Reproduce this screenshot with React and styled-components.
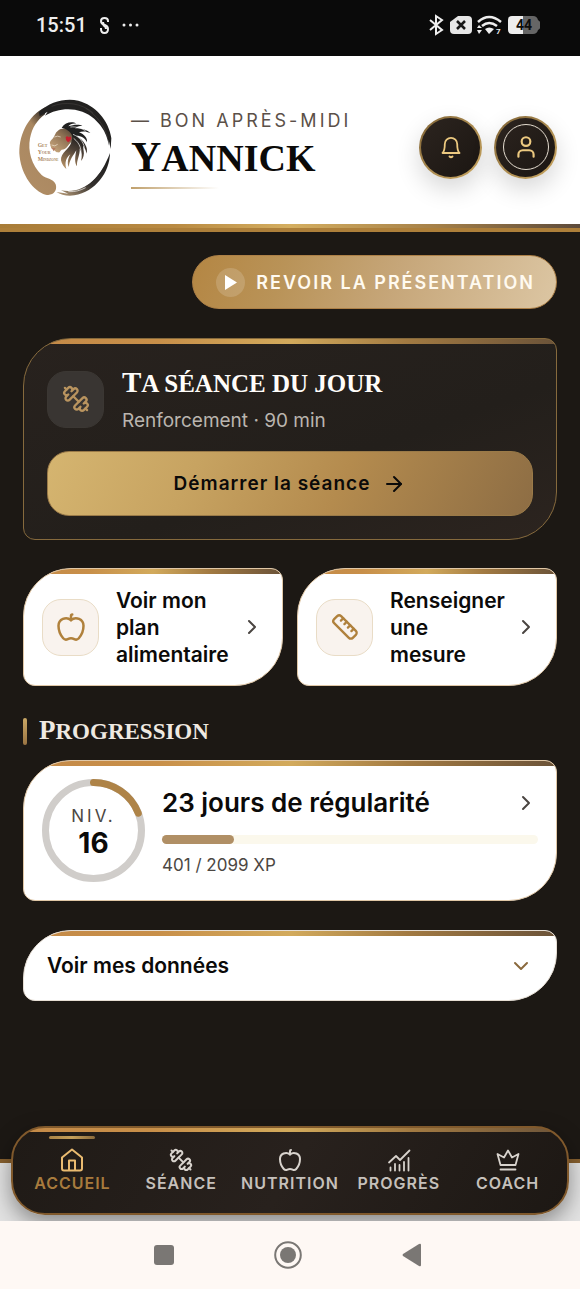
/*
    Home screen
    Greeting header, session of the day, shortcuts, progression and bottom dock
 */

import React from "react";
import styled, { createGlobalStyle, css } from "styled-components";
import { Apple, ArrowRight, ChevronDown, ChevronRight, Dumbbell, Ruler, User } from "lucide-react";

const color_dark = "#1c1814";
const color_gold = "#b0813c";
const color_tan = "#b08f65";
const color_chevron = "#4a4541";
const gold_line = "linear-gradient(90deg, #c48a48 0%, #c88f49 25%, #d2aa5c 50%, #a27a42 72%, #6b5339 100%)";
const font_text = "Inter, Roboto, sans-serif";
const font_title = "'Liberation Serif', 'Times New Roman', serif";

const GlobalStyle = createGlobalStyle`
  * {
    box-sizing: border-box;
  }

  body {
    margin: 0;
    background: #ffffff;
    font-family: ${font_text};
    color: #0b0a09;
  }

  button {
    margin: 0;
    padding: 0;
    border: 0;
    background: none;
    font: inherit;
    color: inherit;
    text-align: left;
    cursor: pointer;
  }

  a {
    color: inherit;
    text-decoration: none;
  }

  h1, h2, p {
    margin: 0;
  }

  svg {
    display: block;
    flex-shrink: 0;
  }
`;

const Screen = styled.div`
  min-height: 100vh;
  display: flex;
  flex-direction: column;
`;

const StatusBar = styled.div`
  height: 56px;
  padding: 0 40px 6px 36px;
  display: flex;
  align-items: center;
  justify-content: space-between;
  background: #0a0a0a;
  color: #eeeeee;
  font-family: Roboto, sans-serif;
  font-size: 20px;
  font-weight: 500;
`;

const StatusGroup = styled.div`
  display: flex;
  align-items: center;
  gap: 12px;
`;

const AppArea = styled.div`
  position: relative;
  flex: 1;
  display: flex;
  flex-direction: column;
  padding-bottom: 58px;
  background: #e2e2e2;
`;

const Header = styled.header`
  height: 168px;
  padding: 14px 23px 0 15px;
  display: flex;
  align-items: center;
  gap: 16px;
  background: #ffffff;
`;

const Greeting = styled.div`
  flex: 1;
  min-width: 0;
  padding-top: 3px;
`;

const Eyebrow = styled.p`
  font-size: 18px;
  line-height: 24px;
  letter-spacing: 3px;
  text-transform: uppercase;
  white-space: nowrap;
  color: #5b5048;
`;

const Name = styled.h1`
  font-family: ${font_title};
  font-size: 38px;
  line-height: 48px;
  font-weight: 700;
  text-transform: uppercase;

  &::first-letter {
    font-size: 42px;
  }
`;

const Underline = styled.div`
  width: 88px;
  height: 2px;
  margin-top: 5px;
  background: linear-gradient(90deg, #c0a06c, #ffffff);
`;

const HeaderActions = styled.div`
  display: flex;
  gap: 12px;
`;

const RoundButton = styled.button`
  width: 63px;
  height: 63px;
  display: flex;
  align-items: center;
  justify-content: center;
  border: 2px solid transparent;
  border-radius: 50%;
  background: linear-gradient(135deg, #2c241f, #1b1612) padding-box,
    linear-gradient(135deg, #7d6033, #a98a50 50%, #c9a560) border-box;
  box-shadow: 0 10px 24px rgba(0, 0, 0, 0.16);
  color: #ecc980;
`;

const Avatar = styled.span`
  width: 46px;
  height: 46px;
  display: flex;
  align-items: center;
  justify-content: center;
  border: 1px solid #e4dccf;
  border-radius: 50%;
`;

const HeaderEdge = styled.div`
  height: 8px;
  border-bottom: 4px solid #ad7f3a;
  background: linear-gradient(90deg, #a87c38 0%, #b98a42 30%, #d4ae60 50%, #a58048 75%, #5c4a3b 100%);
`;

const Main = styled.main`
  flex: 1;
  display: flex;
  flex-direction: column;
  padding: 23px 23px 0;
  border-bottom: 4px solid #87602f;
  background: ${color_dark};
`;

const ReplayButton = styled.button`
  align-self: flex-end;
  height: 54px;
  padding: 0 21px 0 23px;
  display: flex;
  align-items: center;
  gap: 11px;
  border: 1px solid #ad8047;
  border-radius: 27px;
  background: linear-gradient(110deg, #b48643 0%, #b99358 25%, #c6a679 55%, #dcc6a3 100%);
  color: #fffaf0;
  font-size: 18px;
  font-weight: 600;
  letter-spacing: 2px;
  text-transform: uppercase;
  white-space: nowrap;
`;

const PlayDot = styled.span`
  width: 29px;
  height: 29px;
  display: flex;
  align-items: center;
  justify-content: center;
  border-radius: 50%;
  background: rgba(255, 255, 255, 0.16);
`;

const cardShape = css`
  border: 1px solid #e0c7a6;
  border-radius: 48px 12px 48px 12px;
  background: ${gold_line} 0 0 / 100% 5px no-repeat, #ffffff;
`;

const SessionCard = styled.section`
  margin-top: 29px;
  padding: 26px 23px 23px;
  ${cardShape}
  border-color: #866a3d;
  background: ${gold_line} 0 0 / 100% 5px no-repeat,
    linear-gradient(160deg, #28221e 0%, #231f1b 60%, #2c241f 100%);
`;

const SessionHead = styled.div`
  display: flex;
  align-items: center;
  gap: 18px;
  margin-bottom: 18px;
`;

const IconTile = styled.span`
  width: 57px;
  height: 57px;
  flex-shrink: 0;
  display: flex;
  align-items: center;
  justify-content: center;
  border: 1px solid ${(props) => (props.$dark ? "#3b3733" : "#e9dcc6")};
  border-radius: 19px;
  background: ${(props) => (props.$dark ? "#393532" : "#f9f3ee")};
  color: ${(props) => (props.$dark ? "#b9945f" : color_gold)};
`;

const SessionTitle = styled.h2`
  font-family: ${font_title};
  font-size: 25px;
  line-height: 34px;
  font-weight: 700;
  text-transform: uppercase;
  color: #fffdfa;

  &::first-letter {
    font-size: 29px;
  }
`;

const SessionInfo = styled.p`
  margin-top: 8px;
  font-size: 19px;
  line-height: 24px;
  color: #bab5af;
`;

const StartButton = styled.button`
  width: 100%;
  height: 65px;
  display: flex;
  align-items: center;
  justify-content: center;
  gap: 12px;
  border: 1px solid #9a7a48;
  border-radius: 22px;
  background: linear-gradient(115deg, #d5b570 0%, #c7a361 30%, #b48b4e 60%, #8d6d44 100%);
  font-size: 19px;
  font-weight: 600;
  letter-spacing: 1px;
`;

const Shortcuts = styled.div`
  margin-top: 28px;
  display: grid;
  grid-template-columns: 1fr 1fr;
  gap: 14px;
`;

const ShortcutCard = styled.button`
  min-width: 0;
  height: 118px;
  padding: 0 18px;
  display: flex;
  align-items: center;
  ${cardShape}
  font-size: 21px;
  line-height: 27px;
  font-weight: 600;
`;

const ShortcutLabel = styled.span`
  flex: 1;
  min-width: 0;
  margin: 0 8px 0 17px;
`;

const SectionTitle = styled.h2`
  margin-top: 29px;
  display: flex;
  align-items: center;
  gap: 12px;
  height: 32px;
  font-family: ${font_title};
  font-size: 23px;
  line-height: 32px;
  font-weight: 700;
  text-transform: uppercase;
  color: #efe9e1;

  &::before {
    content: "";
    width: 4px;
    height: 27px;
    border-radius: 2px;
    background: linear-gradient(#c9a765, #9a7442);
  }
`;

const SectionLabel = styled.span`
  display: block;

  &::first-letter {
    font-size: 27px;
  }
`;

const LevelCard = styled.button`
  margin-top: 13px;
  height: 141px;
  padding: 0 18px;
  display: flex;
  align-items: center;
  gap: 17px;
  ${cardShape}
`;

const Ring = styled.span`
  width: 103px;
  height: 103px;
  flex-shrink: 0;
  display: grid;
  place-items: center;

  > * {
    grid-area: 1 / 1;
  }
`;

const RingText = styled.span`
  padding-top: 3px;
  display: flex;
  flex-direction: column;
  align-items: center;
`;

const RingLabel = styled.span`
  font-size: 17px;
  line-height: 22px;
  letter-spacing: 3px;
  color: #4c4743;
`;

const RingValue = styled.span`
  font-size: 28px;
  line-height: 32px;
  font-weight: 700;
`;

const LevelBody = styled.span`
  flex: 1;
  min-width: 0;
  padding-top: 2px;
  display: flex;
  flex-direction: column;
`;

const LevelTitle = styled.span`
  display: flex;
  align-items: center;
  justify-content: space-between;
  font-size: 26px;
  line-height: 32px;
  font-weight: 600;
  white-space: nowrap;
`;

const Track = styled.span`
  height: 9px;
  margin: 16px 0 10px;
  border-radius: 5px;
  background: #fbf8ec;
`;

const Fill = styled.span`
  display: block;
  height: 100%;
  border-radius: 5px;
  background: ${color_tan};
`;

const LevelInfo = styled.span`
  font-size: 17px;
  line-height: 22px;
  color: #4c4743;
`;

const DataCard = styled.button`
  margin-top: 29px;
  height: 71px;
  padding: 0 23px;
  display: flex;
  align-items: center;
  justify-content: space-between;
  ${cardShape}
  border-color: #e6ded4;
  font-size: 21px;
  font-weight: 600;
`;

const Dock = styled.nav`
  position: absolute;
  left: 11px;
  right: 11px;
  bottom: 6px;
  height: 89px;
  padding: 0 5px;
  display: grid;
  grid-template-columns: repeat(5, 1fr);
  border: 2px solid #80592c;
  border-radius: 34px;
  background: ${gold_line} 0 0 / 100% 4px no-repeat, linear-gradient(120deg, #1f1a16, #28211d 50%, #1d1814);
  box-shadow: 0 8px 22px rgba(0, 0, 0, 0.4);
`;

const DockItem = styled.a`
  min-width: 0;
  display: flex;
  flex-direction: column;
  align-items: center;
  font-size: 16px;
  line-height: 22px;
  font-weight: 600;
  letter-spacing: 1px;
  text-transform: uppercase;
  white-space: nowrap;
  color: ${(props) => (props.$active ? "#a87b3d" : "#c5c0bb")};

  &::before {
    content: "";
    width: 46px;
    height: 3px;
    margin: 8px 0 9px;
    border-radius: 2px;
    background: ${(props) => (props.$active ? "linear-gradient(90deg, #a98345, #c5a05b, #8a6a3c)" : "transparent")};
  }

  svg {
    color: ${(props) => (props.$active ? "#eabb70" : "#d8d3cd")};
  }
`;

const SystemBar = styled.div`
  position: relative;
  height: 68px;
  padding-right: 4px;
  display: grid;
  grid-template-columns: repeat(3, 60px);
  justify-content: center;
  gap: 64px;
  background: #fef8f4;
  color: #7a7774;
`;

const SystemButton = styled.button`
  display: flex;
  align-items: center;
  justify-content: center;
`;

const MirroredDumbbell = styled(Dumbbell)`
  transform: scaleX(-1);
`;

function LineIcon({ size = 24, width = 2, children }) {
  return (
    <svg
      width={size}
      height={size}
      viewBox="0 0 24 24"
      fill="none"
      stroke="currentColor"
      strokeWidth={width}
      strokeLinecap="round"
      strokeLinejoin="round"
      aria-hidden="true"
    >
      {children}
    </svg>
  );
}

function HouseIcon() {
  return (
    <LineIcon>
      <path d="M2 9.500L12 1.500L22 9.500V20.500Q22 22.500 20 22.500H4Q2 22.500 2 20.500Z" />
      <path d="M9 22V12.500H15V22" />
    </LineIcon>
  );
}

function ChartIcon() {
  return (
    <LineIcon width={1.8}>
      <path d="M2 14.500L9 8L13 12L22.500 2.500" />
      <path d="M3.500 19.500V22.500M8 16V22.500M12.500 17V22.500M17 14V22.500M21.500 10V22.500" />
    </LineIcon>
  );
}

function CrownIcon() {
  return (
    <LineIcon width={1.8}>
      <path d="M4.500 17L1.500 6L8 9.500L12 2.500L16 9.500L22.500 6L19.500 17Z" />
      <path d="M4.500 21.500H19.500" />
    </LineIcon>
  );
}

function BellIcon() {
  return (
    <LineIcon size={24} width={1.8}>
      <path d="M3.500 18H20.500C18.200 16 18.200 13.500 18.200 9A6.200 6.200 0 0 0 5.800 9C5.800 13.500 5.800 16 3.500 18Z" />
      <path d="M10.500 21.500Q12 23 13.500 21.500" />
    </LineIcon>
  );
}

function Logo() {
  return (
    <svg width="100" height="105" viewBox="0 0 300 315" role="img" aria-label="Get Your Mindzone">
      <defs>
        <linearGradient id="brush" x1="0" y1="1" x2="0.500" y2="0">
          <stop offset="0" stopColor="#b18e66" />
          <stop offset="0.780" stopColor="#a98760" />
          <stop offset="1" stopColor="#3b332b" />
        </linearGradient>
        <linearGradient id="sweep" x1="1" y1="0" x2="0" y2="1">
          <stop offset="0" stopColor="#1d1d1d" />
          <stop offset="0.550" stopColor="#33302d" />
          <stop offset="1" stopColor="#c0a27d" />
        </linearGradient>
        <linearGradient id="mane" gradientUnits="userSpaceOnUse" x1="195" y1="120" x2="150" y2="215">
          <stop offset="0" stopColor="#171717" />
          <stop offset="0.450" stopColor="#4c4036" />
          <stop offset="1" stopColor="#b18d62" />
        </linearGradient>
        <linearGradient id="face" gradientUnits="userSpaceOnUse" x1="175" y1="95" x2="115" y2="165">
          <stop offset="0" stopColor="#453a31" />
          <stop offset="0.450" stopColor="#8d7153" />
          <stop offset="1" stopColor="#c3a27a" />
        </linearGradient>
      </defs>
      <path
        fill="url(#brush)"
        d="M92 36C38 62 8 125 14 185C20 240 55 288 92 299C115 304 128 286 122 268C114 249 92 252 80 240C49 210 38 168 45 130C51 98 66 76 90 58Z"
      />
      <path
        fill="#222120"
        d="M72 52C104 20 150 9 190 17C240 30 282 76 289 130L287 162L281 134L282 152C276 122 268 105 252 86C234 64 212 50 180 44C148 39 116 46 90 62L98 50L74 64Z"
      />
      <path fill="none" stroke="#5d5955" strokeWidth="1" d="M110 34C150 18 200 24 235 54M212 40C245 60 270 95 278 130" />
      <path
        fill="url(#sweep)"
        d="M285 174C284 232 242 290 178 301C158 304 138 300 124 291L160 296L138 286C178 293 208 280 232 258C256 236 272 208 285 174Z"
      />
      <path fill="none" stroke="#ffffff" strokeWidth="2" d="M264 212C250 240 236 256 206 274M160 290C182 291 196 286 212 278" />
      <path
        fill="url(#face)"
        d="M128 108C142 96 160 100 172 112C180 122 178 134 168 142C158 152 154 164 140 164C134 168 136 174 128 172C120 172 120 164 108 160C110 156 104 152 106 148C102 142 108 136 114 130C120 122 120 114 128 108Z"
      />
      <path fill="none" stroke="#f4e8d8" strokeWidth="2" d="M118 126Q128 121 137 126M110 150Q120 156 128 148" />
      <path
        fill="#202020"
        d="M140 98C150 82 172 78 184 86C174 84 164 88 160 94C176 88 194 88 202 92C192 92 184 96 180 100C200 100 218 106 226 114C214 108 200 108 192 112C208 118 218 130 216 142C212 130 198 122 184 122C202 136 210 154 202 174C202 154 188 138 172 130C174 116 158 102 140 98Z"
      />
      <path
        fill="url(#mane)"
        d="M168 144C164 160 136 174 138 196C140 208 148 218 154 222C148 202 154 188 166 178C158 192 156 208 162 216C162 196 176 180 184 166C180 186 178 204 186 214C184 196 196 180 194 160C200 172 202 184 198 198C214 180 206 154 190 138C202 148 214 162 214 176C222 160 206 134 184 124L172 128Z"
      />
      <path fill="none" stroke="#ffffff" strokeWidth="2" d="M174 118C194 126 206 142 208 158M176 130C196 146 202 166 196 190M166 96C186 94 200 100 212 108" />
      <path fill="#c61f2f" d="M152 127Q157 120 161 127Q167 121 169 130Q167 138 159 142Q151 136 152 127Z" />
      <path fill="#b67a60" d="M110 158L122 159L116 169Z" />
      <g fontFamily="Liberation Serif, serif" fontSize="17" fontWeight="700" fill="#aa875e">
        <text x="68" y="155">G<tspan fontSize="12">ET</tspan></text>
        <text x="68" y="177">Y<tspan fontSize="12">OUR</tspan></text>
        <text x="68" y="198">M<tspan fontSize="10">INDZONE</tspan></text>
      </g>
    </svg>
  );
}

function StatusIcons() {
  return (
    <svg width="111" height="22" viewBox="1 0 111 22" aria-hidden="true">
      <path fill="none" stroke="#eeeeee" strokeWidth="2" d="M2 6L14 16L8 20V2L14 6L2 16" />
      <path fill="#e6e6e6" d="M30 2H40Q44 2 44 6V16Q44 20 40 20H26Q22 20 22 16V8Z" />
      <path stroke="#151515" strokeWidth="2.500" d="M29 7L37 15M37 7L29 15" />
      <g fill="none" stroke="#eeeeee" strokeWidth="2.500">
        <path d="M50 8Q61 -2 73 8" />
        <path d="M54 12Q61 6 69 12" />
      </g>
      <path fill="#eeeeee" d="M57 15Q61 12 66 15L61 20ZM49 14L51 11L54 14ZM49 16H54L51 20Z" />
      <text x="68" y="20" fontFamily="Roboto, sans-serif" fontSize="8" fontWeight="700" fill="#eeeeee">7</text>
      <path fill="#666666" d="M94 2H105Q109 2 110 6Q113 8 113 11Q113 14 110 16Q109 20 105 20H94Z" />
      <path fill="#eeeeee" d="M84 2H95V20H84Q80 20 80 16V6Q80 2 84 2Z" />
      <text x="88" y="16" fontFamily="Roboto, sans-serif" fontSize="14" fontWeight="700" fill="#0c0c0c">44</text>
    </svg>
  );
}

function LevelRing({ level, ratio }) {
  const radius = 48;
  const length = 2 * Math.PI * radius;

  return (
    <Ring>
      <svg width="103" height="103" viewBox="0 0 103 103" fill="none" strokeWidth="7" aria-hidden="true">
        <circle cx="51.500" cy="51.500" r={radius} stroke="#d0cdca" />
        <circle
          cx="51.500"
          cy="51.500"
          r={radius}
          stroke="#ae8347"
          strokeLinecap="round"
          strokeDasharray={`${length * ratio} ${length}`}
          transform="rotate(-90 51.500 51.500)"
        />
      </svg>
      <RingText>
        <RingLabel>NIV.</RingLabel>
        <RingValue>{level}</RingValue>
      </RingText>
    </Ring>
  );
}

const dockItems = [
  { label: "Accueil", icon: <HouseIcon /> },
  { label: "Séance", icon: <MirroredDumbbell size={24} strokeWidth={2} /> },
  { label: "Nutrition", icon: <Apple size={24} strokeWidth={2} /> },
  { label: "Progrès", icon: <ChartIcon /> },
  { label: "Coach", icon: <CrownIcon /> }
];

export default function App() {
  const xp = 401;
  const xpMax = 2099;

  return (
    <Screen>
      <GlobalStyle />
      <StatusBar>
        <StatusGroup>
          <span>15:51</span>
          <svg width="11" height="17" viewBox="0 0 11 17" fill="none" stroke="#eeeeee" strokeWidth="2" aria-hidden="true">
            <path d="M9 5V4Q9 1 5.500 1Q2 1 2 4Q2 7 5.500 8Q9 9 9 12Q9 16 5.500 16Q2 16 2 12V11" />
            <path d="M4 5Q4 8 7 9M7 12Q7 9 4 8" />
          </svg>
          <svg width="17" height="4" viewBox="0 0 17 4" fill="#eeeeee" aria-hidden="true">
            <circle cx="2" cy="2" r="1.500" />
            <circle cx="8.500" cy="2" r="1.500" />
            <circle cx="15" cy="2" r="1.500" />
          </svg>
        </StatusGroup>
        <StatusIcons />
      </StatusBar>

      <AppArea>
        <Header>
          <Logo />
          <Greeting>
            <Eyebrow>— Bon après-midi</Eyebrow>
            <Name>Yannick</Name>
            <Underline />
          </Greeting>
          <HeaderActions>
            <RoundButton aria-label="Notifications">
              <BellIcon />
            </RoundButton>
            <RoundButton aria-label="Profil">
              <Avatar>
                <User size={26} strokeWidth={2} />
              </Avatar>
            </RoundButton>
          </HeaderActions>
        </Header>
        <HeaderEdge />

        <Main>
          <ReplayButton>
            <PlayDot>
              <svg width="12" height="15" viewBox="0 0 12 15" fill="#ffffff" aria-hidden="true">
                <path d="M0 0L12 7.500L0 15Z" />
              </svg>
            </PlayDot>
            Revoir la présentation
          </ReplayButton>

          <SessionCard>
            <SessionHead>
              <IconTile $dark>
                <MirroredDumbbell size={28} strokeWidth={2} />
              </IconTile>
              <div>
                <SessionTitle>Ta séance du jour</SessionTitle>
                <SessionInfo>Renforcement · 90 min</SessionInfo>
              </div>
            </SessionHead>
            <StartButton>
              Démarrer la séance
              <ArrowRight size={24} strokeWidth={2} />
            </StartButton>
          </SessionCard>

          <Shortcuts>
            <ShortcutCard>
              <IconTile>
                <Apple size={30} strokeWidth={2} />
              </IconTile>
              <ShortcutLabel>Voir mon plan alimentaire</ShortcutLabel>
              <ChevronRight size={24} strokeWidth={2} color={color_chevron} />
            </ShortcutCard>
            <ShortcutCard>
              <IconTile>
                <Ruler size={28} strokeWidth={2} />
              </IconTile>
              <ShortcutLabel>Renseigner une mesure</ShortcutLabel>
              <ChevronRight size={24} strokeWidth={2} color={color_chevron} />
            </ShortcutCard>
          </Shortcuts>

          <SectionTitle>
            <SectionLabel>Progression</SectionLabel>
          </SectionTitle>

          <LevelCard>
            <LevelRing level={16} ratio={xp / xpMax} />
            <LevelBody>
              <LevelTitle>
                23 jours de régularité
                <ChevronRight size={24} strokeWidth={2} color={color_chevron} />
              </LevelTitle>
              <Track>
                <Fill style={{ width: `${(xp / xpMax) * 100}%` }} />
              </Track>
              <LevelInfo>{xp} / {xpMax} XP</LevelInfo>
            </LevelBody>
          </LevelCard>

          <DataCard>
            Voir mes données
            <ChevronDown size={24} strokeWidth={2} color="#8a6a3e" />
          </DataCard>
        </Main>

        <Dock>
          {dockItems.map((item, index) => (
            <DockItem key={item.label} href={`#${item.label}`} $active={index === 0}>
              {item.icon}
              {item.label}
            </DockItem>
          ))}
        </Dock>
      </AppArea>

      <SystemBar>
        <SystemButton aria-label="Applications récentes">
          <svg width="20" height="20" viewBox="0 0 20 20" fill="currentColor">
            <rect width="20" height="20" rx="3" />
          </svg>
        </SystemButton>
        <SystemButton aria-label="Écran d'accueil">
          <svg width="28" height="28" viewBox="0 0 28 28" fill="currentColor">
            <circle cx="14" cy="14" r="12.800" fill="none" stroke="currentColor" strokeWidth="2" />
            <circle cx="14" cy="14" r="8" />
          </svg>
        </SystemButton>
        <SystemButton aria-label="Retour">
          <svg width="20" height="24" viewBox="0 0 20 24" fill="currentColor">
            <path d="M1 11Q0 12 1 13L17 23Q19 24 19 22V2Q19 0 17 1Z" />
          </svg>
        </SystemButton>
      </SystemBar>
    </Screen>
  );
}
